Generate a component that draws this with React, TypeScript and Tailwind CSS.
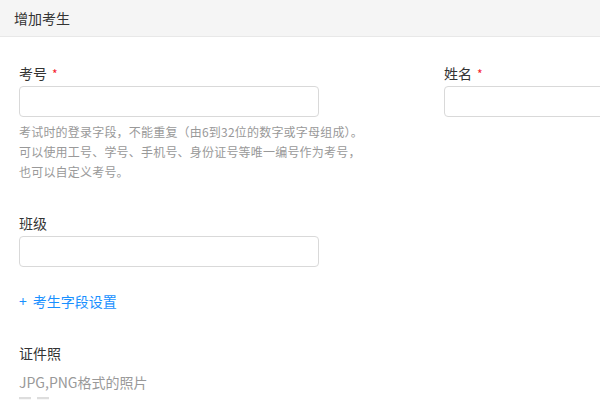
import React from "react";

const font = { fontFamily: '"Noto Sans CJK SC", "Noto Sans", sans-serif' };

function Label({ text, required }: { text: string; required?: boolean }) {
  return (
    <div className="flex items-center h-[22px] text-[14px] leading-[22px] text-[#333]">
      <span>{text}</span>
      {required && <span className="ml-[5px] text-[12px] text-[#f5222d] leading-none mt-[1px]">*</span>}
    </div>
  );
}

function Input() {
  return <div className="mt-[2px] h-[31px] w-[300px] rounded-[4px] border border-[#d9d9d9] bg-white" />;
}

export default function App() {
  return (
    <div className="w-[600px] h-[400px] overflow-hidden bg-white" style={font}>
      <div className="h-[37px] bg-[#f5f5f5] border-b border-[#e8e8e8] flex items-center px-[14px] text-[14px] text-[#333]">
        增加考生
      </div>
      <div className="pl-[19px] pt-[25px]">
        <div className="flex">
          <div className="w-[340px] shrink-0">
            <Label text="考号" required />
            <Input />
            <div className="mt-[5px] text-[12px] leading-[20px] text-[#999] whitespace-nowrap tracking-[0.2px]">
              <div>考试时的登录字段，不能重复（由6到32位的数字或字母组成）。</div>
              <div>可以使用工号、学号、手机号、身份证号等唯一编号作为考号，</div>
              <div>也可以自定义考号。</div>
            </div>
          </div>
          <div className="ml-[85px] w-[300px] shrink-0">
            <Label text="姓名" required />
            <Input />
          </div>
        </div>
        <div className="mt-[30px]">
          <Label text="班级" />
          <Input />
        </div>
        <div className="mt-[23px] h-[22px] leading-[22px] text-[14px] text-[#1890ff] flex items-center">
          <span className="mr-[6px]">+</span>
          <span>考生字段设置</span>
        </div>
        <div className="mt-[30px]">
          <Label text="证件照" />
          <div className="mt-[7px] h-[22px] leading-[22px] text-[14px] text-[#999]">JPG,PNG格式的照片</div>
          <div className="mt-[4px] flex gap-[6px]">
            <div className="w-[12px] h-[12px] border-t-[2px] border-[#ddd] bg-[#f7f7f7]" />
            <div className="w-[12px] h-[12px] border-t-[2px] border-[#ddd] bg-[#f7f7f7]" />
          </div>
        </div>
      </div>
    </div>
  );
}
